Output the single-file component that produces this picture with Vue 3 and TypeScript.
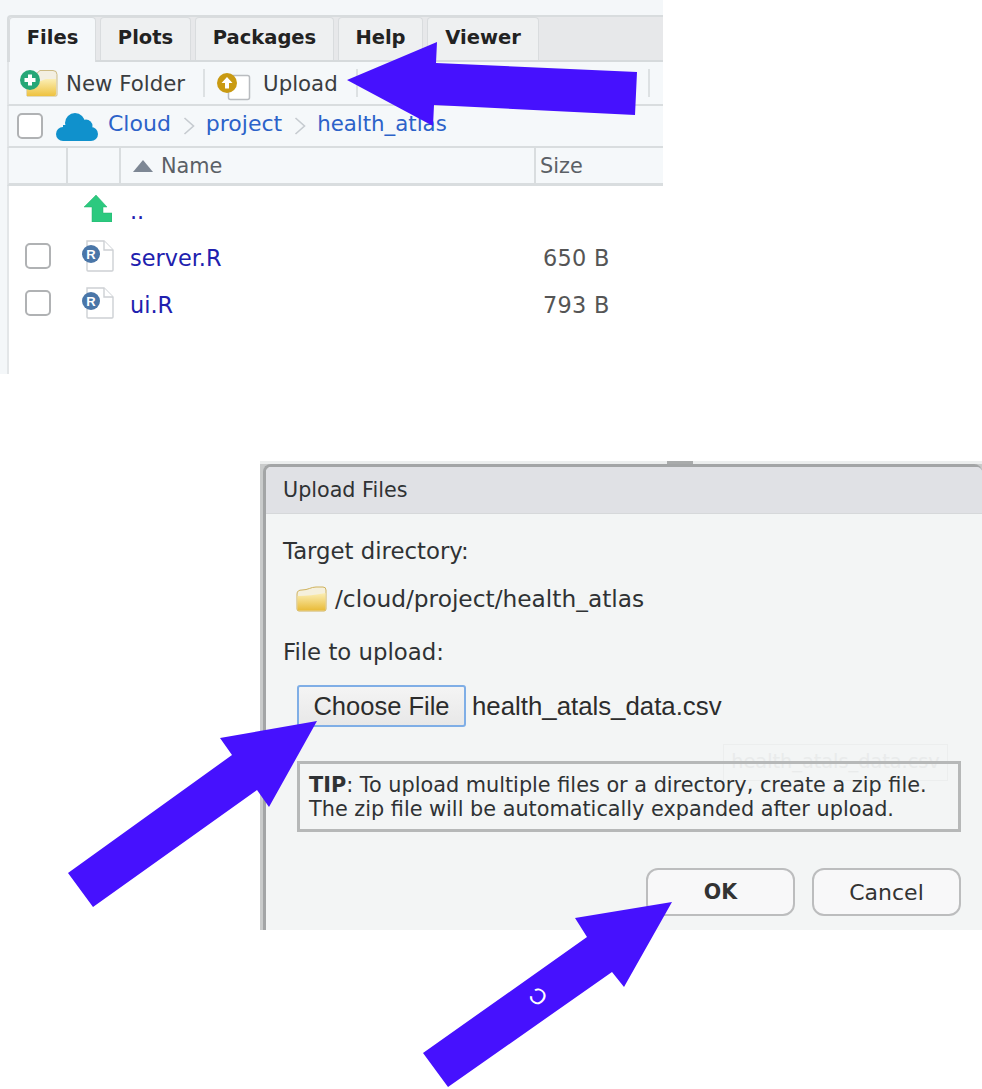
<script setup lang="ts">
interface Row { name: string; size: string; check: boolean; up?: boolean }
const tabs: string[] = ['Files', 'Plots', 'Packages', 'Help', 'Viewer']
const tabWidths: number[] = [87, 91, 139, 85, 112]
const crumbs: string[] = ['Cloud', 'project', 'health_atlas']
const rows: Row[] = [
  { name: '..', size: '', check: false, up: true },
  { name: 'server.R', size: '650 B', check: true },
  { name: 'ui.R', size: '793 B', check: true },
]
</script>

<template>
  <div class="page">
    <section class="pane">
      <div class="tabs">
        <div v-for="(t, i) in tabs" :key="t" class="tab" :class="{ active: i === 0 }" :style="{ width: tabWidths[i] + 'px' }">{{ t }}</div>
      </div>
      <div class="toolbar">
        <svg class="ico-new" width="38" height="30" viewBox="0 0 38 30">
          <defs>
            <linearGradient id="fold1" x1="0" y1="0" x2="0" y2="1">
              <stop offset="0" stop-color="#fbeeb4" />
              <stop offset="1" stop-color="#eec23f" />
            </linearGradient>
          </defs>
          <path d="M20 2.500 H33 a4 4 0 0 1 4 4 V27 a1 1 0 0 1-1 1 H7 V14z" fill="#f3efe2" stroke="#cdbb85" />
          <path d="M7 28 V16 C14 16 20 13 26 11 H36 V26 a2 2 0 0 1-2 2z" fill="url(#fold1)" />
          <circle cx="10" cy="12" r="10" fill="#25a777" />
          <path d="M10 6.500 v11 M4.500 12 h11" stroke="#fff" stroke-width="4" />
        </svg>
        <span class="tool new">New Folder</span>
        <i class="sep s1"></i>
        <svg class="ico-up" width="36" height="36" viewBox="0 0 36 36">
          <rect x="11.500" y="10.500" width="21" height="24" rx="2" fill="#fff" stroke="#b9bcc0" stroke-width="1.500" />
          <circle cx="10" cy="18" r="10" fill="#c99a12" />
          <path d="M10 12 l5.500 6 h-3.500 v5.500 h-4 V18 h-3.500z" fill="#fff" />
        </svg>
        <span class="tool upload">Upload</span>
        <i class="sep s2"></i>
        <i class="sep s3"></i>
      </div>
      <div class="crumbs">
        <span class="box first"></span>
        <svg class="cloud" width="42" height="28" viewBox="0 0 42 28">
          <g fill="#1091cc">
            <circle cx="19" cy="10" r="10" />
            <circle cx="30" cy="13" r="6.500" />
            <circle cx="7" cy="21" r="7" />
            <circle cx="35" cy="21" r="7" />
            <rect x="7" y="12" width="28" height="16" />
          </g>
        </svg>
        <template v-for="(c, i) in crumbs" :key="c">
          <span class="crumb" :class="'c' + i">{{ c }}</span>
          <svg v-if="i < 2" class="chev" width="12" height="20" viewBox="0 0 12 20"><path d="M1.500 2 L10.500 10 L1.500 18" fill="none" stroke="#c6cbd0" stroke-width="1.600" /></svg>
        </template>
      </div>
      <div class="thead">
        <div class="th w1"></div>
        <div class="th w2"></div>
        <div class="th name"><span class="tri"></span>Name</div>
        <div class="th size">Size</div>
      </div>
      <div class="rows">
        <div v-for="r in rows" :key="r.name" class="row">
          <div class="cell-check"><span v-if="r.check" class="box"></span></div>
          <div class="cell-ico">
            <svg v-if="r.up" class="up" width="28" height="28" viewBox="0 0 28 28">
              <path d="M12 1 L23 13 H19 V19 H28 V28 H8 V13 H0z" fill="#2cc97f" stroke="#22b26c" stroke-width="0.500" />
            </svg>
            <svg v-else class="doc" width="32" height="32" viewBox="0 0 32 32">
              <path d="M5 1 h17 l9 9 v20 a1 1 0 0 1-1 1 H6 a1 1 0 0 1-1-1z" fill="#fff" stroke="#cdd0d4" stroke-width="1.400" />
              <path d="M22 1 v9 h9" fill="#fff" stroke="#cdd0d4" stroke-width="1.400" />
              <circle cx="9" cy="14" r="9" fill="#4a76a8" />
              <text x="9" y="18.500" text-anchor="middle" class="r-glyph">R</text>
            </svg>
          </div>
          <div class="cell-name">{{ r.name }}</div>
          <div class="cell-size">{{ r.size }}</div>
        </div>
      </div>
    </section>

    <section class="dialog-wrap">
      <i class="top-mark"></i>
      <div class="dialog">
        <div class="title">Upload Files</div>
        <div class="body">
          <div class="label">Target directory:</div>
          <div class="dir">
            <svg width="31" height="26" viewBox="0 0 31 26">
              <defs>
                <linearGradient id="fold2" x1="0" y1="0" x2="0" y2="1">
                  <stop offset="0" stop-color="#fbeeb4" />
                  <stop offset="1" stop-color="#e9bb38" />
                </linearGradient>
              </defs>
              <path d="M1 8 C1 5 3 4 6 4 C12 4 15 1 20 1 H27 a3 3 0 0 1 3 3 V23 a2 2 0 0 1-2 2 H3 a2 2 0 0 1-2-2z" fill="#f5f0dd" stroke="#cfb25c" />
              <path d="M1.500 10 C10 10 20 9 29.500 7 V23 a1.500 1.500 0 0 1-1.500 1.500 H3 A1.500 1.500 0 0 1 1.500 23z" fill="url(#fold2)" />
            </svg>
            <span>/cloud/project/health_atlas</span>
          </div>
          <div class="label second">File to upload:</div>
          <div class="file">
            <button class="choose" type="button">Choose File</button>
            <span class="fname">health_atals_data.csv</span>
          </div>
          <div class="ghost">health_atals_data.csv</div>
          <div class="tip">
            <div><b>TIP</b>: To upload multiple files or a directory, create a zip file.</div>
            <div>The zip file will be automatically expanded after upload.</div>
          </div>
          <div class="actions">
            <button class="btn ok" type="button">OK</button>
            <button class="btn cancel" type="button">Cancel</button>
          </div>
        </div>
      </div>
    </section>

    <svg class="arrows" width="982" height="1089" viewBox="0 0 982 1089">
      <polygon fill="#4611fe" points="347,80 437,42 436,63 637,72 635,115 434,105 433,126" />
      <polygon fill="#4611fe" points="317,721 220,738 232,755 68,873 93,907 257,790 269,807" />
      <polygon fill="#4611fe" points="672,902 575,918 587,937 423,1053 448,1087 612,972 624,987" />
      <text class="c-mark" transform="translate(538 997) rotate(-145)" x="0" y="8" text-anchor="middle">C</text>
    </svg>
  </div>
</template>

<style scoped>
.page {
  position: relative;
  width: 982px;
  height: 1089px;
  overflow: hidden;
  background: #fff;
  font-family: "DejaVu Sans", sans-serif;
  color: #333;
}
.pane {
  width: 663px;
  height: 374px;
  box-sizing: border-box;
  padding: 15px 0 0 7px;
  background: #f4f7f9;
}
.tabs {
  display: flex;
  height: 47px;
  box-sizing: border-box;
  padding: 0;
  gap: 4px;
  background: #e7e8ea;
  border-top: 2px solid #d8dcde;
  border-bottom: 2px solid #d6dadc;
  border-left: 2px solid #d8dcde;
  border-radius: 4px 0 0 0;
}
.tab {
  box-sizing: border-box;
  height: 43px;
  flex: none;
  padding-top: 7px;
  text-align: center;
  font-size: 19.500px;
  font-weight: 700;
  line-height: 26px;
  color: #222;
  background: #eef0f1;
  border: 1px solid #d9dcde;
  border-bottom: 0;
  border-radius: 4px 4px 0 0;
}
.tab.active {
  background: #f5f8fa;
  height: 45px;
  position: relative;
  z-index: 1;
}
.toolbar {
  display: flex;
  align-items: center;
  height: 44px;
  background: #f5f8fa;
  border-left: 2px solid #e3e6e8;
  border-bottom: 2px solid #d9dddf;
  box-sizing: border-box;
}
.ico-new { margin-left: 11px; flex: none; }
.tool { font-size: 21.300px; color: #3a3d40; }
.new { margin-left: 8px; }
.sep { display: block; width: 2px; height: 28px; background: #dde1e3; flex: none; }
.s1 { margin-left: 18px; }
.ico-up { margin-left: 12px; flex: none; }
.upload { margin-left: 10px; }
.s2 { margin-left: 18px; }
.s3 { margin-left: 290px; }
.crumbs {
  display: flex;
  align-items: center;
  height: 42px;
  box-sizing: border-box;
  background: #f5f8fa;
  border-left: 2px solid #e3e6e8;
  border-bottom: 2px solid #d9dddf;
  font-size: 22px;
  color: #2c62c9;
}
.box {
  display: block;
  width: 26px;
  height: 26px;
  box-sizing: border-box;
  background: #fff;
  border: 2px solid #b0b2b4;
  border-radius: 5px;
}
.box.first { margin-left: 8px; flex: none; }
.cloud { margin: 2px 0 0 13px; flex: none; }
.crumb { line-height: 24px; margin-top: -4px; }
.c0 { margin-left: 10px; }
.c2 { font-size: 21.300px; }
.chev { margin: 0 11px 0 12px; flex: none; }
.thead {
  display: flex;
  height: 38px;
  box-sizing: border-box;
  background: #f5f8fa;
  border-left: 2px solid #e3e6e8;
  border-bottom: 3px solid #d9dddf;
  font-size: 20.800px;
  line-height: 28px;
  color: #5b6066;
}
.th { box-sizing: border-box; border-right: 2px solid #d9dddf; display: flex; align-items: center; padding-top: 1px; }
.w1 { width: 59px; }
.w2 { width: 53px; }
.th.name { width: 415px; padding-left: 12px; }
.th.size { border-right: 0; padding-left: 4px; }
.tri {
  display: block;
  width: 0;
  height: 0;
  margin-right: 8px;
  border-left: 10px solid transparent;
  border-right: 10px solid transparent;
  border-bottom: 12px solid #7d8794;
}
.rows { border-left: 2px solid #e3e6e8; height: 188px; box-sizing: border-box; padding-top: 1px; background: #fff; }
.row { display: flex; height: 47px; align-items: center; font-size: 22.400px; }
.cell-check { width: 73px; flex: none; padding-left: 16px; box-sizing: border-box; }
.cell-check .box { margin-top: -4px; }
.cell-ico { width: 48px; flex: none; display: flex; }
.up { margin: -5px 0 0 2px; }
.doc { margin-top: -3px; }
.cell-name { width: 413px; flex: none; color: #2020ae; }
.cell-size { color: #555; letter-spacing: 0.3px; }
.r-glyph { font-family: "Liberation Sans", sans-serif; font-size: 13px; font-weight: 700; fill: #fff; }

.dialog-wrap {
  position: relative;
  width: 722px;
  margin: 87px 0 0 260px;
  height: 469px;
  box-sizing: border-box;
  padding: 3px 0 0 0;
  background: linear-gradient(#eceeee 0 3px, #c9cbcb 3px);
}
.top-mark {
  position: absolute;
  left: 407px;
  top: 0;
  width: 26px;
  height: 3px;
  background: #a9abab;
}
.dialog {
  position: relative;
  height: 466px;
  box-sizing: border-box;
  margin-left: 3px;
  background: #f3f5f5;
  border-top: 3px solid #a3a5a6;
  border-left: 3px solid #a3a5a6;
  border-radius: 8px 8px 0 0;
  color: #2f3234;
}
.title {
  height: 47px;
  box-sizing: border-box;
  background: #e0e1e5;
  border-bottom: 1px solid #d6d8da;
  padding: 11px 0 0 17px;
  font-size: 20.700px;
  border-radius: 5px 5px 0 0;
  line-height: 24px;
}
.body { padding: 24px 21px 0 17px; font-size: 22.800px; }
.label { line-height: 26px; }
.dir { display: flex; align-items: center; margin: 19px 0 0 13px; gap: 8px; height: 30px; font-size: 23.300px; }
.dir svg { flex: none; margin-top: 2px; }
.second { margin-top: 26px; }
.file { display: flex; align-items: center; margin: 20px 0 0 14px; }
.choose {
  width: 169px;
  height: 42px;
  box-sizing: border-box;
  padding: 0;
  border: 2px solid #7faee6;
  border-radius: 3px;
  background: linear-gradient(#f4f4f4, #e8e8e8);
  color: #2c2c2c;
  font-family: "Liberation Sans", sans-serif;
  font-size: 25.500px;
}
.fname { margin-left: 6px; font-family: "Liberation Sans", sans-serif; font-size: 25.800px; color: #2c2c2c; }
.ghost {
  position: absolute;
  left: 457px;
  top: 277px;
  width: 225px;
  height: 37px;
  box-sizing: border-box;
  border: 1px solid #eceeee;
  font-size: 19.300px;
  line-height: 34px;
  text-align: center;
  color: #e9ebeb;
}
.tip {
  position: relative;
  margin: 34px 0 0 14px;
  width: 664px;
  height: 71px;
  box-sizing: border-box;
  border: 3px solid #b6b8b8;
  padding: 9px 0 0 9px;
  font-size: 20.800px;
  line-height: 24px;
}
.actions { display: flex; justify-content: flex-end; gap: 17px; margin-top: 36px; }
.btn {
  width: 149px;
  height: 48px;
  box-sizing: border-box;
  background: #f8f8f9;
  border: 2px solid #bcbdbe;
  border-radius: 12px;
  color: #333;
  font-family: "DejaVu Sans", sans-serif;
  font-size: 22px;
  padding: 0;
}
.ok { font-weight: 700; font-size: 20.500px; }
.arrows { position: absolute; left: 0; top: 0; pointer-events: none; }
.c-mark { font-family: "Liberation Sans", sans-serif; font-size: 22px; fill: #fff; }
</style>
